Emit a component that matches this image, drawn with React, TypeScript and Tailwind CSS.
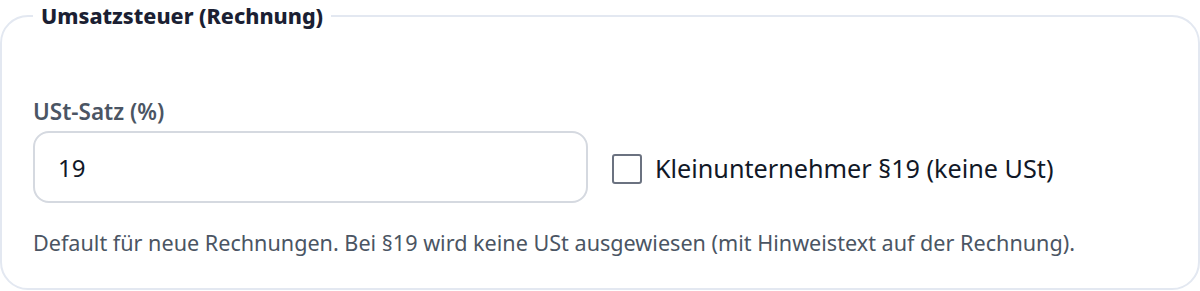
import React, { useState } from "react";

export default function App() {
  const [rate, setRate] = useState("19");
  const [small, setSmall] = useState(false);

  return (
    <div className="w-[1200px] h-[291px] bg-white font-['Noto_Sans',sans-serif]">
      <fieldset className="m-0 w-full border-2 border-[#e3e8f1] rounded-[28px] pl-[31px] pr-[31px] pt-[66px] pb-[31px]">
        <legend className="px-2 text-[21.5px] leading-[32px] font-extrabold text-[#1b1f33]">
          Umsatzsteuer (Rechnung)
        </legend>

        <div className="grid grid-cols-2 gap-6 items-end">
          <div>
            <label className="block mb-[5px] text-[22.5px] leading-[28px] font-semibold text-[#4b5563]">
              USt-Satz (%)
            </label>
            <input
              value={rate}
              onChange={(e) => setRate(e.target.value)}
              className="w-full h-[72px] rounded-[16px] border-2 border-[#d5d9e0] px-[23px] text-[24px] text-[#111827] outline-none"
            />
          </div>

          {/* checkbox */}
          <label className="h-[72px] pt-[4px] flex items-center gap-[13px] cursor-pointer">
            <span
              onClick={() => setSmall(!small)}
              className="w-[30px] h-[30px] border-2 border-[#6b7280] rounded-[3px] bg-white flex items-center justify-center"
            >
              {small && <span className="w-3 h-3 bg-[#374151]" />}
            </span>
            <span className="text-[25.2px] text-[#111827]">
              Kleinunternehmer §19 (keine USt)
            </span>
          </label>
        </div>

        <p className="mt-[26px] text-[21.6px] leading-[28px] text-[#4b5563]">
          Default für neue Rechnungen. Bei §19 wird keine USt ausgewiesen (mit Hinweistext auf der Rechnung).
        </p>
      </fieldset>
    </div>
  );
}
